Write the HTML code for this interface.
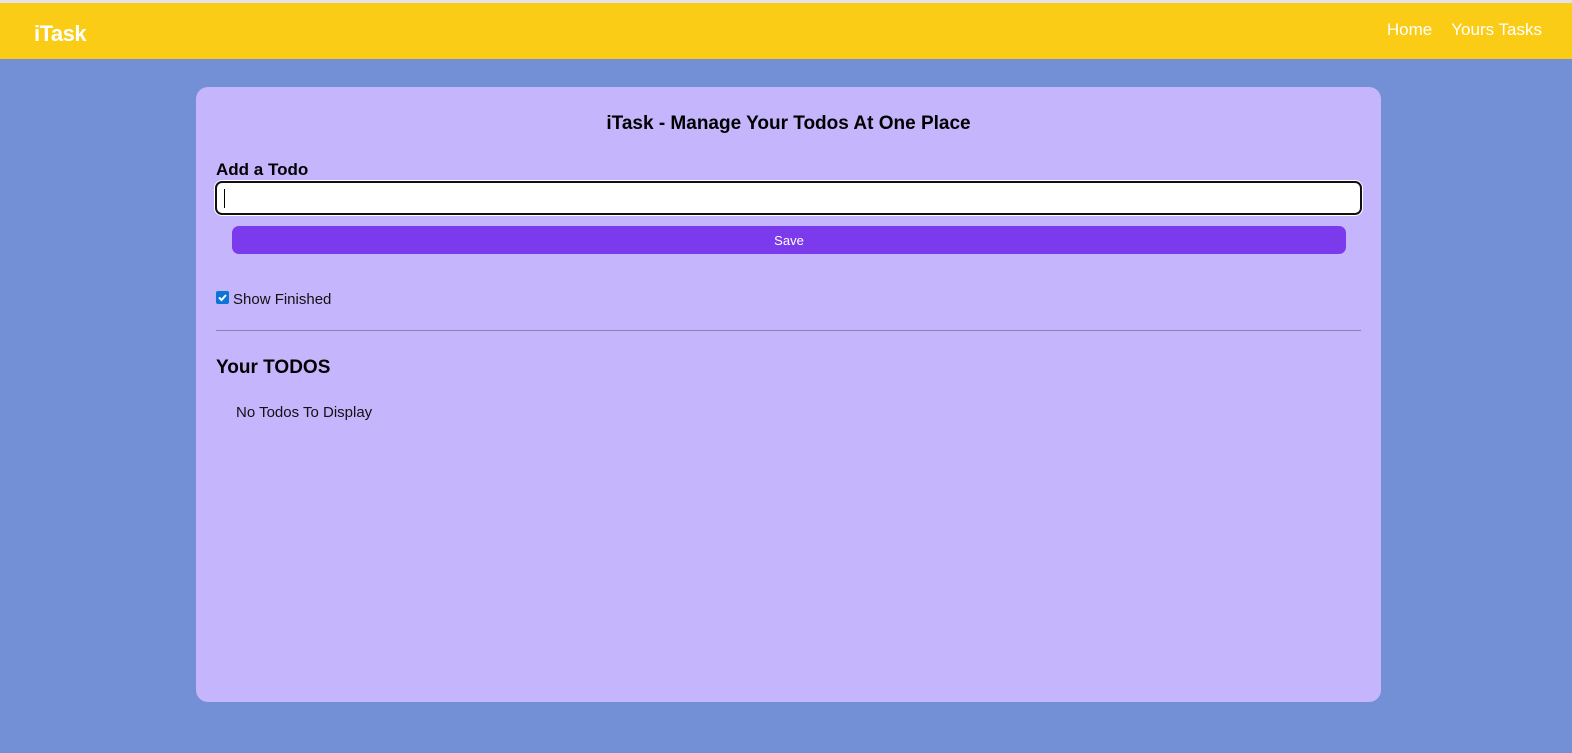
<!DOCTYPE html>
<html><head><style>
*{margin:0;padding:0;box-sizing:border-box}
html,body{overflow:hidden}
body{width:1572px;height:753px;background:#738fd6;font-family:"Liberation Sans",sans-serif;position:relative}
.top{position:absolute;left:0;top:0;width:1572px;height:3px;background:#e4e2ea}
nav{position:absolute;left:0;top:3px;width:1572px;height:56px;background:#facc15;color:#fff}
.logo{position:absolute;left:34px;top:18px;font-size:22px;font-weight:bold;letter-spacing:-0.5px}
.links{position:absolute;right:30px;top:17px;font-size:17px}
.links span{margin-left:19px}
.card{position:absolute;left:196px;top:87px;width:1185px;height:615px;background:#c4b5fd;border-radius:12px}
h1{position:absolute;left:0;width:100%;top:26px;text-align:center;font-size:19px;font-weight:bold;color:#000}
.lbl{position:absolute;left:20px;top:73px;font-size:17px;font-weight:bold}
.inp{position:absolute;left:19px;top:94px;width:1147px;height:34px;background:#fff;border:2px solid #111;border-radius:7px;box-shadow:0 0 0 1px #fff}
.caret{position:absolute;left:7px;top:6px;width:1px;height:19px;background:#000}
.btn{position:absolute;left:36px;top:139px;width:1114px;height:28px;background:#7c3aed;border-radius:7px;color:#fff;font-size:13px;text-align:center;line-height:29px}
.chk{position:absolute;left:20px;top:204px;width:13px;height:13px;background:#0b74d8;border-radius:2px}
.chkl{position:absolute;left:37px;top:204px;font-size:15px;color:#111}
hr{position:absolute;left:20px;top:243px;width:1145px;border:0;border-top:1px solid #8a82a8}
h2{position:absolute;left:20px;top:270px;font-size:19px;font-weight:bold}
.none{position:absolute;left:40px;top:317px;font-size:15px;color:#111}
</style></head><body>
<div class="top"></div>
<nav><div class="logo">iTask</div><div class="links"><span>Home</span><span>Yours Tasks</span></div></nav>
<div class="card">
<h1>iTask - Manage Your Todos At One Place</h1>
<div class="lbl">Add a Todo</div>
<div class="inp"><div class="caret"></div></div>
<div class="btn">Save</div>
<div class="chk"><svg width="13" height="13" viewBox="0 0 13 13"><path d="M3 6.5 L5.5 9 L10 4" stroke="#fff" stroke-width="2" fill="none"/></svg></div>
<div class="chkl">Show Finished</div>
<hr>
<h2>Your TODOS</h2>
<div class="none">No Todos To Display</div>
</div>
</body></html>
